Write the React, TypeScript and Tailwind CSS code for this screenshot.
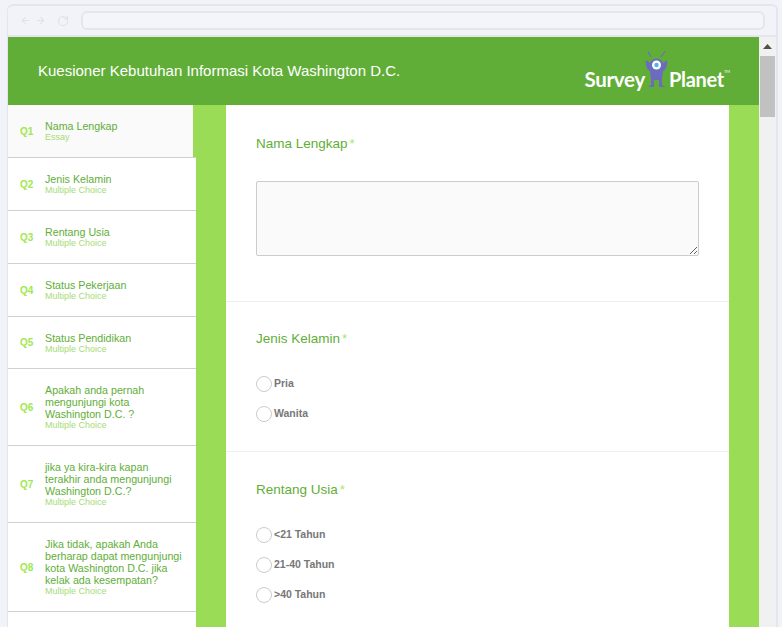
import React from 'react';
import { ArrowLeft, ArrowRight, RotateCw } from 'lucide-react';

interface Question {
  id: string;
  title: string;
  type: string;
}

const questions: Question[] = [
  { id: 'Q2', title: 'Jenis Kelamin', type: 'Multiple Choice' },
  { id: 'Q3', title: 'Rentang Usia', type: 'Multiple Choice' },
  { id: 'Q4', title: 'Status Pekerjaan', type: 'Multiple Choice' },
  { id: 'Q5', title: 'Status Pendidikan', type: 'Multiple Choice' },
  { id: 'Q6', title: 'Apakah anda pernah mengunjungi kota Washington D.C. ?', type: 'Multiple Choice' },
  { id: 'Q7', title: 'jika ya kira-kira kapan terakhir anda mengunjungi Washington D.C.?', type: 'Multiple Choice' },
  { id: 'Q8', title: 'Jika tidak, apakah Anda berharap dapat mengunjungi kota Washington D.C. jika kelak ada kesempatan?', type: 'Multiple Choice' },
];

const Row: React.FC<{ q: Question }> = ({ q }) => (
  <div className="flex items-center pt-[15px] pb-[14.1px] pl-3">
    <span className="w-[25px] shrink-0 text-[10px] font-bold text-[#9ee84f]">{q.id}</span>
    <div className="w-[140px]">
      <p className="text-[10.7px] leading-[12px] text-[#61ae37]">{q.title}</p>
      <p className="text-[9px] leading-[10.8px] text-[#a6dc76]">{q.type}</p>
    </div>
  </div>
);

const Radio: React.FC<{ label: string }> = ({ label }) => (
  <div className="flex h-[30px] items-center">
    <span className="h-4 w-4 rounded-full border border-[#cccccc] bg-white" />
    <span className="ml-[2px] text-[10.5px] font-bold text-[#777777]">{label}</span>
  </div>
);

const Title: React.FC<{ text: string }> = ({ text }) => (
  <h2 className="text-[13.5px] leading-5 text-[#61ae37]">
    {text}
    <span className="ml-[2px] text-[#a6e86a]">*</span>
  </h2>
);

const Logo: React.FC = () => (
  <div className="flex items-end text-white" style={{ fontFamily: 'Lato, sans-serif' }}>
    <span className="text-[20.5px] font-bold leading-[24px] tracking-[-0.3px]">Survey</span>
    <svg width="24" height="38" viewBox="0 0 24 38" className="mb-[2px]">
      <path d="M6 6 L3 0.5 M16 6 L20 0.5" stroke="#6b6cc0" strokeWidth="1.2" />
      <path d="M5 12 C7 6 16 6 18 12 L22 9 C23 14 21 19 18 20 L17 28 L17 34 L20 36 L14 36 L14 29 L9 29 L9 36 L3 36 L6 34 L6 28 L5 20 C2 19 0 14 1 9 Z" fill="#6b6cc0" />
      <circle cx="11.5" cy="14" r="4.5" fill="#ffffff" />
      <circle cx="11.5" cy="14" r="2.2" fill="#4fb4e6" />
    </svg>
    <span className="text-[20px] font-bold leading-[24px] tracking-[-0.3px]">Planet</span>
    <span className="mb-[17px] text-[4px] leading-[4px]">TM</span>
  </div>
);

export default function App() {
  return (
    <div
      className="h-[627px] w-[782px] overflow-hidden bg-[#f2f3f9] pl-[7px] pr-1 pt-1"
      style={{ fontFamily: '"Liberation Sans", Arial, sans-serif' }}
    >
      <div className="flex h-[623px] flex-col rounded-t-md border-2 border-b-0 border-[#e4e6ee] border-l-[1px]">
        {/* browser toolbar */}
        <div className="flex h-[31px] shrink-0 items-center border-b-2 border-[#e4e6ee] pl-3 pr-[11px]">
          <ArrowLeft size={11} className="text-[#e0e2ea]" strokeWidth={2.5} />
          <ArrowRight size={11} className="ml-1 text-[#e0e2ea]" strokeWidth={2.5} />
          <RotateCw size={12} className="ml-[11px] text-[#e0e2ea]" strokeWidth={2.5} />
          <div className="ml-[12px] h-[19px] flex-1 rounded-md border-2 border-[#e4e6ee] bg-[#f4f5fa]" />
        </div>

        <div className="flex min-h-0 flex-1">
          <div className="flex w-[751px] shrink-0 flex-col">
            <header className="flex h-[68px] shrink-0 items-center justify-between bg-[#60ae38] pl-[30px] pr-[29px]">
              <h1 className="text-[15px] text-white">Kuesioner Kebutuhan Informasi Kota Washington D.C.</h1>
              <Logo />
            </header>

            <div className="flex flex-1 bg-[#9bdc57]">
              <nav className="w-[188px] shrink-0">
                <div className="border-b border-[#d0d0d0]">
                  <div className="w-[185px] bg-[#fafafa]">
                    <Row q={{ id: 'Q1', title: 'Nama Lengkap', type: 'Essay' }} />
                  </div>
                </div>
                <div className="h-full bg-white">
                  {questions.map((q) => (
                    <div key={q.id} className="border-b border-[#d0d0d0]">
                      <Row q={q} />
                    </div>
                  ))}
                </div>
              </nav>

              <main className="ml-[30px] w-[503px] bg-white">
                <section className="border-b border-[#eeeeee] px-[30px] pb-[45px] pt-[29px]">
                  <Title text="Nama Lengkap" />
                  <textarea className="mt-[27px] block h-[75px] w-[443px] rounded-[2px] border border-[#cccccc] bg-[#fafafa]" />
                </section>
                <section className="border-b border-[#eeeeee] px-[30px] pb-[22px] pt-[27px]">
                  <Title text="Jenis Kelamin" />
                  <div className="mt-5">
                    <Radio label="Pria" />
                    <Radio label="Wanita" />
                  </div>
                </section>
                <section className="px-[30px] pt-[28px]">
                  <Title text="Rentang Usia" />
                  <div className="mt-5">
                    <Radio label="<21 Tahun" />
                    <Radio label="21-40 Tahun" />
                    <Radio label=">40 Tahun" />
                  </div>
                </section>
              </main>
            </div>
          </div>

          {/* scrollbar */}
          <div className="flex w-[17px] shrink-0 flex-col items-center bg-[#f1f1f1]">
            <svg width="9" height="5" viewBox="0 0 9 5" className="mt-[7px]">
              <path d="M4.5 0 L9 5 L0 5 Z" fill="#505050" />
            </svg>
            <div className="mt-[7px] h-[61px] w-[15px] bg-[#c1c1c1]" />
          </div>
        </div>
      </div>
    </div>
  );
}
